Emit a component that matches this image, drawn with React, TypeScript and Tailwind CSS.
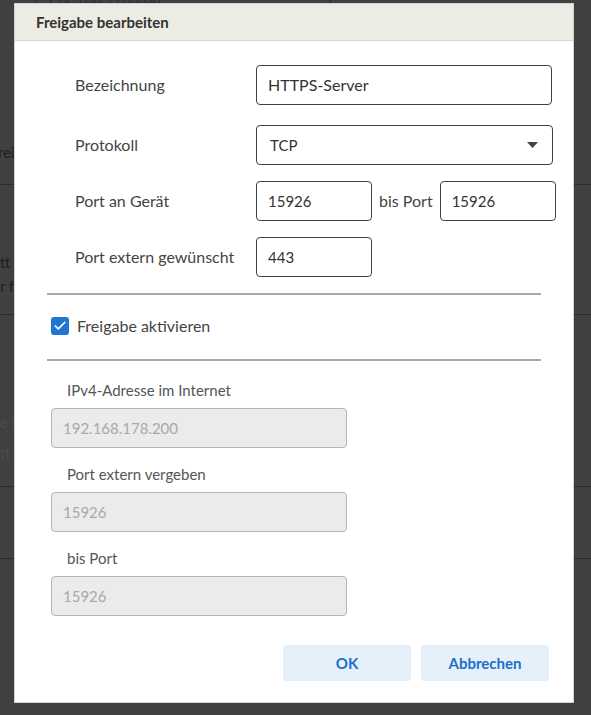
import { Check } from "lucide-react";

const font = { fontFamily: "Lato, 'Noto Sans', sans-serif" };

function TextBox({ value, className = "" }: { value: string; className?: string }) {
  return (
    <div className={`h-[40px] flex items-center px-[11px] rounded-[4px] border border-[#3d4247] text-[15px] text-[#333] ${className}`}>
      {value}
    </div>
  );
}

function ReadOnlyField({ label, value }: { label: string; value: string }) {
  return (
    <div className="flex flex-col">
      <p className="pl-[16px] h-[20px] leading-[20px] text-[15px] text-[#555]">{label}</p>
      <div className="mt-[8px] w-[296px] h-[40px] flex items-center px-[11px] rounded-[4px] border border-[#b5b5b5] bg-[#ebebeb] text-[15px] text-[#a9a9a9]">
        {value}
      </div>
    </div>
  );
}

function Backdrop() {
  return (
    <div className="absolute inset-0 flex flex-col bg-[#404040] text-[15px]">
      <div className="h-[185px] border-b border-[#2b2b2b]">
        <div className="ml-[36px] w-[295px] h-[4px] border-x border-[#2c2c2c] relative overflow-hidden">
          <span className="absolute left-[9px] -top-[13px] text-[#2e2e2e]">192.168.178.200</span>
        </div>
        <p className="mt-[138px] -ml-[2px] leading-[20px] text-[#1f1f1f]">rei</p>
      </div>
      <div className="h-[130px] border-b border-[#2b2b2b] pt-[65px] leading-[24px] text-[#1f1f1f]">
        <p>tt f</p>
        <p>r f</p>
      </div>
      <div className="h-[172px] border-b border-[#2b2b2b] pt-[92px] leading-[31px] text-[#4c4c4c]">
        <p>e l</p>
        <p>tt f</p>
      </div>
      <div className="h-[72px] border-b border-[#2b2b2b]" />
      <div className="flex-1" />
    </div>
  );
}

export default function App() {
  return (
    <div className="relative w-[591px] h-[715px] overflow-hidden" style={font}>
      <Backdrop />

      <div className="absolute left-[14px] top-[3px] w-[560px] h-[700px] bg-white border border-[#d2d2d2] flex flex-col">
        <div className="h-[37px] shrink-0 flex items-center px-[21px] bg-[#ecece5] border-b border-[#d6d6d6]">
          <h2 className="text-[15px] font-bold text-[#333]">Freigabe bearbeiten</h2>
        </div>

        <div className="flex flex-col pt-[24px]">
          <div className="flex flex-col gap-[16px] pl-[60px]">
            <div className="flex items-center">
              <span className="w-[181px] text-[16px] text-[#444]">Bezeichnung</span>
              <TextBox value="HTTPS-Server" className="w-[296px] text-[16px]" />
            </div>
            <div className="flex items-center mt-[4px]">
              <span className="w-[181px] text-[16px] text-[#444]">Protokoll</span>
              <div className="w-[297px] h-[40px] flex items-center justify-between pl-[13px] pr-[14px] rounded-[4px] border border-[#3d4247] text-[15px] text-[#333]">
                <span>TCP</span>
                <svg width="11" height="6" viewBox="0 0 11 6">
                  <path d="M0 0h11L5.5 6z" fill="#444" />
                </svg>
              </div>
            </div>
            <div className="flex items-center">
              <span className="w-[181px] text-[16px] text-[#444]">Port an Gerät</span>
              <TextBox value="15926" className="w-[116px]" />
              <span className="mx-[7px] text-[16px] text-[#444]">bis Port</span>
              <TextBox value="15926" className="w-[116px]" />
            </div>
            <div className="flex items-center">
              <span className="w-[181px] text-[16px] text-[#444]">Port extern gewünscht</span>
              <TextBox value="443" className="w-[116px]" />
            </div>
          </div>

          <div className="ml-[32px] mt-[16px] w-[494px] h-[2px] bg-[#a8a8a8]" />

          <label className="ml-[36px] mt-[22px] h-[18px] flex items-center gap-[8px]">
            <span className="w-[18px] h-[18px] rounded-[3px] bg-[#1f76d2] flex items-center justify-center">
              <Check size={14} strokeWidth={3} color="white" />
            </span>
            <span className="text-[16px] text-[#444]">Freigabe aktivieren</span>
          </label>

          <div className="ml-[32px] mt-[24px] w-[494px] h-[2px] bg-[#a8a8a8]" />

          <div className="ml-[36px] mt-[19px] flex flex-col gap-[16px]">
            <ReadOnlyField label="IPv4-Adresse im Internet" value="192.168.178.200" />
            <ReadOnlyField label="Port extern vergeben" value="15926" />
            <ReadOnlyField label="bis Port" value="15926" />
          </div>

          <div className="mt-[29px] flex justify-end gap-[10px] pr-[24px]">
            <button type="button" className="w-[128px] h-[36px] rounded-[3px] bg-[#e5f0fa] text-[15px] font-bold text-[#1b6fc9]">
              OK
            </button>
            <button type="button" className="w-[128px] h-[36px] rounded-[3px] bg-[#e5f0fa] text-[15px] font-bold text-[#1b6fc9]">
              Abbrechen
            </button>
          </div>
        </div>
      </div>
    </div>
  );
}
